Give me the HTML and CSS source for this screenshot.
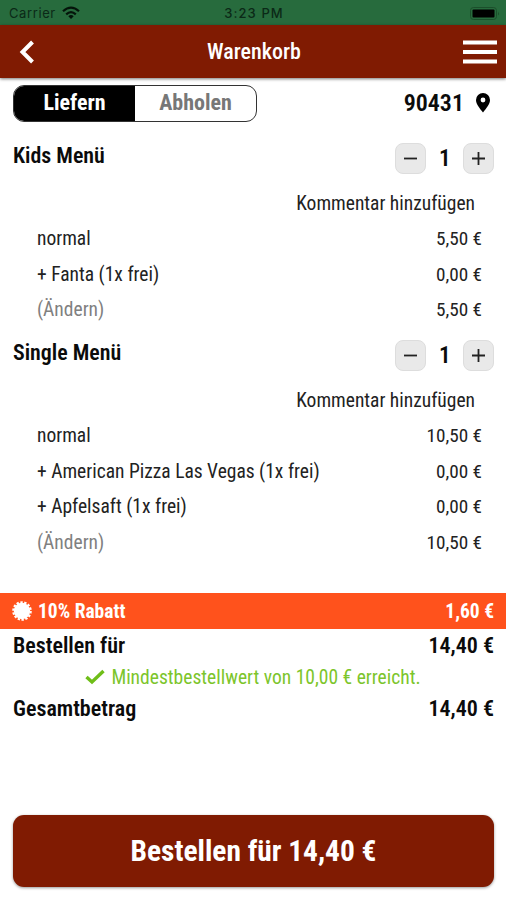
FILE: index.html
```html
<!DOCTYPE html>
<html lang="de">
<head>
<meta charset="utf-8">
<title>Warenkorb</title>
<link rel="stylesheet" href="styles.css">
</head>
<body>
<div class="status">
  <div class="carrier"><span>Carrier</span>
    <svg width="18" height="14" viewBox="0 0 18 14"><g fill="none" stroke="#04140a" stroke-width="2.2"><path d="M1 5.2Q9 -2 17 5.2"/><path d="M4.2 8.4Q9 4 13.8 8.4"/></g><path d="M6.3 10.2Q9 8 11.7 10.2L9 13Z" fill="#04140a"/></svg>
  </div>
  <span class="time">3:23 PM</span>
  <svg class="battery" width="30" height="13" viewBox="0 0 30 13"><rect x=".5" y=".5" width="26" height="12" rx="3" fill="none" stroke="#1b4f2b"/><rect x="2.5" y="2.5" width="22" height="8" rx="1" fill="#000"/><path d="M28 4.5q1.8 2 0 4z" fill="#1b4f2b"/></svg>
</div>
<header class="header">
  <svg width="34" height="24" viewBox="0 0 34 24"><path d="M14.500 2L4.500 12L14.500 22" fill="none" stroke="#fff" stroke-width="4"/></svg>
  <h1>Warenkorb</h1>
  <svg width="34" height="24" viewBox="0 0 34 24"><path d="M0 2.5H34M0 12H34M0 21.5H34" stroke="#fff" stroke-width="4"/></svg>
</header>
<main>
  <div class="mode">
    <div class="toggle"><span class="on">Liefern</span><span class="off">Abholen</span></div>
    <div class="place"><span>90431</span>
      <svg width="14" height="20" viewBox="0 0 14 20"><path fill-rule="evenodd" d="M7 0a7 7 0 0 1 7 7c0 4-3.400 8-7 12.500C3.400 15 0 11 0 7a7 7 0 0 1 7-7zm0 4.600a2.400 2.400 0 1 0 0 4.800a2.400 2.400 0 0 0 0-4.800z"/></svg>
    </div>
  </div>
  <section class="item">
    <div class="head"><h2>Kids Menü</h2>
      <div class="qty"><button><svg width="15" height="15" viewBox="0 0 15 15"><path d="M1 7.500H14"/></svg></button><b>1</b><button><svg width="15" height="15" viewBox="0 0 15 15"><path d="M1 7.500H14M7.500 1V14"/></svg></button></div>
    </div>
    <div class="note"><span>Kommentar hinzufügen</span></div>
    <div class="row"><span>normal</span><span>5,50 €</span></div>
    <div class="row"><span>+ Fanta (1x frei)</span><span>0,00 €</span></div>
    <div class="row"><span class="edit">(Ändern)</span><span>5,50 €</span></div>
  </section>
  <section class="item">
    <div class="head"><h2>Single Menü</h2>
      <div class="qty"><button><svg width="15" height="15" viewBox="0 0 15 15"><path d="M1 7.500H14"/></svg></button><b>1</b><button><svg width="15" height="15" viewBox="0 0 15 15"><path d="M1 7.500H14M7.500 1V14"/></svg></button></div>
    </div>
    <div class="note"><span>Kommentar hinzufügen</span></div>
    <div class="row"><span>normal</span><span>10,50 €</span></div>
    <div class="row"><span>+ American Pizza Las Vegas (1x frei)</span><span>0,00 €</span></div>
    <div class="row"><span>+ Apfelsaft (1x frei)</span><span>0,00 €</span></div>
    <div class="row"><span class="edit">(Ändern)</span><span>10,50 €</span></div>
  </section>
</main>
<div class="discount">
  <div><svg width="20" height="20" viewBox="-10 -10 20 20"><circle r="8.200" fill="#fff"/><circle r="8.700" fill="none" stroke="#fff" stroke-width="2.200" stroke-dasharray="2.400 1.504"/></svg><span>10% Rabatt</span></div>
  <span>1,60 €</span>
</div>
<div class="total"><span>Bestellen für</span><span>14,40 €</span></div>
<div class="minimum"><svg width="20" height="16" viewBox="0 0 20 16"><path d="M1.500 8L7 13L18.500 2" fill="none" stroke="#6fbe18" stroke-width="3.400"/></svg><span>Mindestbestellwert von 10,00 € erreicht.</span></div>
<div class="total"><span>Gesamtbetrag</span><span>14,40 €</span></div>
<button class="order">Bestellen für 14,40 €</button>
</body>
</html>
```
FILE: styles.css
```css
* { box-sizing: border-box; }
body { margin: 0; width: 506px; height: 900px; background: #fff; color: #0b0b0b; font-family: "Roboto Condensed", Roboto, sans-serif; font-stretch: 75%; overflow: hidden; display: flex; flex-direction: column; }
svg { display: block; flex: none; }
span, h1, h2, b { white-space: nowrap; }
h1, h2 { margin: 0; }
button { border: 0; padding: 0; font-family: inherit; font-stretch: inherit; }
.status { height: 25px; background: #276b3d; display: grid; grid-template-columns: 1fr auto 1fr; align-items: center; padding: 1px 6px 0 9px; font: 13px Inter, sans-serif; color: #0b2917; flex: none; }
.carrier { display: flex; align-items: center; gap: 6px; letter-spacing: .6px; }
.time { font-weight: 500; letter-spacing: 1.1px; padding-right: 1px; }
.battery { justify-self: end; }
.header { height: 53px; flex: none; background: #801b02; display: grid; grid-template-columns: 1fr auto 1fr; align-items: center; padding: 0 9px 0 18px; color: #fff; box-shadow: 0 1px 3px #0008; }
.header svg:last-child { justify-self: end; }
.header h1 { font-size: 22px; font-weight: 500; padding-right: 7px; }
main { height: 515px; flex: none; padding: 7px 12px 0 13px; }
.mode { display: flex; justify-content: space-between; height: 37px; }
.toggle { width: 244px; border: 1px solid #333; border-radius: 11px; overflow: hidden; display: grid; grid-template-columns: 1fr 1fr; text-align: center; font-size: 22px; line-height: 34px; font-weight: 700; }
.on { background: #000; color: #fff; }
.off { color: #777; }
.place { display: flex; align-items: center; gap: 12px; font-size: 24px; font-weight: 600; padding: 0 4px 2px 0; }
.item { height: 197px; padding-top: 20px; }
.head { display: flex; justify-content: space-between; height: 43.500px; }
.head h2 { font-size: 21.900px; line-height: 27px; font-weight: 600; }
.qty { display: flex; gap: 13px; height: 32px; align-items: center; }
.qty button { width: 31px; height: 31px; border: 1px solid #ddd; border-radius: 8px; background: #e9e9e9; display: grid; place-items: center; }
.qty path { stroke: #222; stroke-width: 1.8; }
.qty b { width: 11px; text-align: center; font-size: 23px; font-weight: 600; }
.note { text-align: right; padding-right: 19px; font-size: 19.500px; line-height: 35.500px; color: #222; }
.row { display: flex; justify-content: space-between; padding: 0 12px 0 24px; font-size: 19.500px; line-height: 35.500px; color: #222; }
.row span:last-child { font-size: 19.200px; }
.row .edit { color: #808080; }
.discount { height: 36px; flex: none; background: #ff521c; color: #fff; display: flex; justify-content: space-between; align-items: center; padding: 0 12px; font-size: 19.500px; font-weight: 700; }
.discount div { display: flex; align-items: center; gap: 6px; }
.total { display: flex; flex: none; justify-content: space-between; padding: 1px 12px 0 13px; font-size: 22px; line-height: 32px; font-weight: 600; }
.minimum { display: flex; flex: none; align-items: center; justify-content: center; gap: 6px; height: 30px; color: #7cc52b; font-size: 19.550px; }
.order { margin: 90px 12px 0 13px; height: 72px; flex: none; border-radius: 11px; background: #801b02; color: #fff; font-size: 29.400px; font-weight: 700; box-shadow: 0 1px 3px #0006; }
```
